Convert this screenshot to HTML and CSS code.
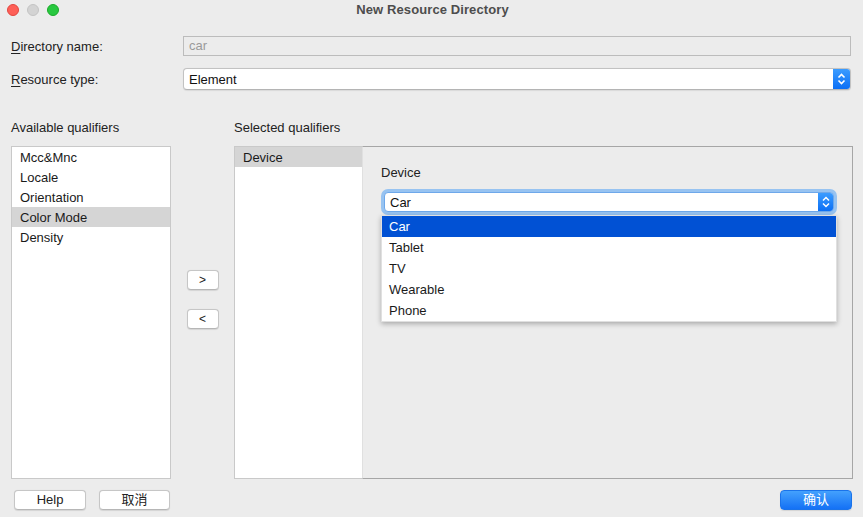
FILE: index.html
```html
<!DOCTYPE html>
<html>
<head>
<meta charset="utf-8">
<link rel="stylesheet" href="styles.css">
</head>
<body>
<div class="window">
  <div class="titlebar">
    <div class="lights">
      <span class="light red"></span>
      <span class="light gray"></span>
      <span class="light green"></span>
    </div>
    <div class="title">New Resource Directory</div>
    <div></div>
  </div>

  <div class="form">
    <div class="row">
      <label class="label"><u>D</u>irectory name:</label>
      <div class="field disabled">car</div>
    </div>
    <div class="row row-combo">
      <label class="label"><u>R</u>esource type:</label>
      <div class="combo">
        <span class="combo-text">Element</span>
        <span class="stepper big">
          <svg width="11" height="16" viewBox="0 0 11 16"><path d="M2.5 6.5 L5.5 3.5 L8.5 6.5 M2.5 9.5 L5.5 12.5 L8.5 9.5" fill="none" stroke="#fff" stroke-width="1.6"/></svg>
        </span>
      </div>
    </div>
  </div>

  <div class="qualifiers">
    <div class="heading h-avail">Available qualifiers</div>
    <div class="heading h-sel">Selected qualifiers</div>

    <div class="list avail">
      <div class="item">Mcc&amp;Mnc</div>
      <div class="item">Locale</div>
      <div class="item">Orientation</div>
      <div class="item active">Color Mode</div>
      <div class="item">Density</div>
    </div>

    <div class="movers">
      <button class="btn small">&gt;</button>
      <button class="btn small">&lt;</button>
    </div>

    <div class="list selected">
      <div class="item active">Device</div>
    </div>

    <div class="panel">
      <div class="panel-label">Device</div>
      <div class="combo-wrap">
        <div class="combo focused">
          <span class="combo-text">Car</span>
          <span class="stepper">
            <svg width="10" height="16" viewBox="0 0 10 16"><path d="M2 6.5 L5 3.5 L8 6.5 M2 9.5 L5 12.5 L8 9.5" fill="none" stroke="#fff" stroke-width="1.5"/></svg>
          </span>
        </div>
        <div class="popup">
          <div class="opt sel">Car</div>
          <div class="opt">Tablet</div>
          <div class="opt">TV</div>
          <div class="opt">Wearable</div>
          <div class="opt">Phone</div>
        </div>
      </div>
    </div>
  </div>

  <div class="footer">
    <div class="footer-left">
      <button class="btn wide">Help</button>
      <button class="btn wide cancel">取消</button>
    </div>
    <button class="btn wide primary">确认</button>
  </div>
</div>
</body>
</html>
```

FILE: styles.css
```css
* { box-sizing: border-box; }

html, body {
  margin: 0;
  padding: 0;
  background: #ececec;
}

body {
  font-family: "Liberation Sans", Arial, "Noto Sans CJK SC", sans-serif;
  font-size: 13px;
  color: #222;
}

.window {
  width: 863px;
  height: 517px;
  display: flex;
  flex-direction: column;
  background: #ececec;
  overflow: hidden;
}

/* Title bar */
.titlebar {
  height: 22px;
  display: grid;
  grid-template-columns: 1fr auto 1fr;
  align-items: start;
}

.lights {
  display: flex;
  gap: 8px;
  padding: 4px 0 0 7px;
}

.light {
  width: 12px;
  height: 12px;
  border-radius: 50%;
  display: block;
}
.light.red { background: #fe5f57; border: 0.5px solid #e2463f; }
.light.gray { background: #d3d3d3; border: 0.5px solid #c4c4c4; }
.light.green { background: #28c840; border: 0.5px solid #1aab29; }

.title {
  font-weight: bold;
  color: #4d4d4d;
  line-height: 16px;
  padding-top: 2px;
  padding-left: 2px;
  letter-spacing: 0.1px;
}

/* Form */
.form {
  padding: 14px 12px 0 11px;
  display: flex;
  flex-direction: column;
  gap: 12px;
}

.row {
  display: flex;
  align-items: center;
  height: 20px;
}
.row-combo { height: 22px; }

.label {
  width: 172px;
  flex: none;
  color: #222;
  padding-top: 1px;
}
.label u { text-underline-offset: 2px; }

.field {
  flex: 1;
  height: 20px;
  border: 1px solid #bcbcbc;
  padding: 0 5px;
  line-height: 18px;
}
.field.disabled {
  background: #ececec;
  color: #9a9a9a;
}

.combo {
  flex: 1;
  height: 22px;
  display: flex;
  align-items: stretch;
  background: #fff;
  border: 1px solid #c2c2c2;
  border-bottom-color: #b4b4b4;
  border-radius: 4px;
  overflow: hidden;
  box-shadow: 0 0.5px 1px rgba(0,0,0,0.08);
}

.combo-text {
  flex: 1;
  padding-left: 5px;
  padding-top: 1px;
  line-height: 19px;
  color: #111;
}

.stepper {
  width: 16px;
  flex: none;
  background: linear-gradient(#3b9cff, #0b6ff5);
  display: flex;
  align-items: center;
  justify-content: center;
}
.stepper.big { width: 17px; }

/* Qualifiers */
.qualifiers {
  margin-top: 30px;
  padding: 0 10px 0 11px;
  display: grid;
  grid-template-columns: 160px 63px 128px 491px;
  grid-template-rows: 16px 333px;
  row-gap: 10px;
}

.heading {
  line-height: 16px;
  color: #222;
}
.h-avail { grid-column: 1 / 3; }
.h-sel { grid-column: 3 / 5; }

.list {
  background: #fff;
  border: 1px solid #c9c9c9;
}
.list.selected { border-right: none; }

.item {
  height: 20px;
  line-height: 19px;
  padding-top: 1px;
  padding-left: 8px;
  color: #1a1a1a;
}
.item.active { background: #d5d5d5; }

.movers {
  display: flex;
  flex-direction: column;
  align-items: center;
  padding-top: 124px;
  gap: 19px;
}

.btn {
  font-family: "Liberation Sans", Arial, "Noto Sans CJK SC", sans-serif;
  font-size: 13px;
  color: #222;
  background: #fff;
  border: 1px solid #c6c6c6;
  border-bottom-color: #b6b6b6;
  border-radius: 4px;
  height: 20px;
  padding: 0;
  line-height: 18px;
  box-shadow: 0 0.5px 1px rgba(0,0,0,0.1);
}
.btn.small { width: 32px; font-size: 12px; }
.btn.wide { width: 72px; }
.btn.cancel { width: 71px; }
.btn.primary {
  color: #fff;
  border-color: #1a73ea;
  background: linear-gradient(#44a1fd, #1471f5);
}

.panel {
  border-top: 1px solid #a6a6a6;
  border-right: 1px solid #a6a6a6;
  border-bottom: 1px solid #a6a6a6;
  border-left: 1px solid #e0e0e0;
  background: #ececec;
  padding: 18px 18px 0 21px;
}

.panel-label {
  line-height: 16px;
  margin-left: -3px;
  color: #222;
}

.combo-wrap {
  margin-top: 11px;
  position: relative;
}

.combo.focused {
  height: 20px;
  border-color: #6ea8ea;
  box-shadow: 0 0 0 3px #97c3f1;
}
.combo.focused .combo-text { line-height: 17px; }
.combo.focused .stepper { width: 15px; }

.popup {
  position: absolute;
  top: 23px;
  left: -3px;
  right: -3px;
  background: #fff;
  border: 1px solid rgba(0,0,0,0.12);
  box-shadow: 0 2px 5px rgba(0,0,0,0.28);
}

.opt {
  height: 21px;
  line-height: 21px;
  padding-left: 7px;
  color: #1a1a1a;
}
.opt.sel {
  background: #0151d4;
  color: #fff;
}

/* Footer */
.footer {
  margin-top: 11px;
  padding: 0 11px 0 14px;
  display: flex;
  justify-content: space-between;
  align-items: center;
}
.footer-left {
  display: flex;
  gap: 13px;
}
```
